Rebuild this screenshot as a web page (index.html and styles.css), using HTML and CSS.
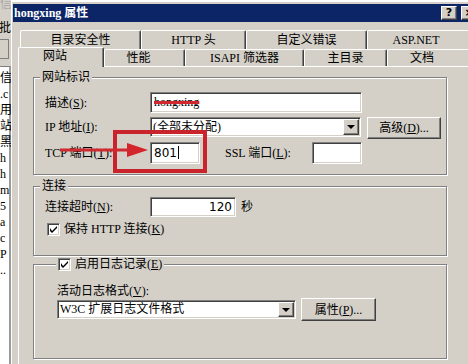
FILE: index.html
```html
<!DOCTYPE html>
<html lang="zh-CN">
<head>
    <meta charset="UTF-8">
    <title>hongxing 属性</title>
    <link rel="stylesheet" href="styles.css">
</head>
<body>

    <div class="desk">
        <!-- finestra dietro, ne resta visibile solo il bordo -->
        <div class="behind">
            <div class="behind-top">
                <div class="bt-title">信</div>
                <div class="bt-tool">批</div>
                <div class="bt-box"></div>
            </div>
            <div class="behind-list">
                <div>信</div>
                <div>.c</div>
                <div>用</div>
                <div>站</div>
                <div>黑</div>
                <div>h</div>
                <div>h</div>
                <div>m</div>
                <div>5</div>
                <div>a</div>
                <div>c</div>
                <div>P</div>
                <div>..</div>
            </div>
        </div>

        <div class="dialog">
            <div class="titlebar">
                <span class="title">hongxing 属性</span>
                <span class="tbtn">?</span>
                <span class="tbtn">×</span>
            </div>

            <div class="tabs">
                <div class="tabrow back">
                    <div class="tab w121">目录安全性</div>
                    <div class="tab w105">HTTP 头</div>
                    <div class="tab w121">自定义错误</div>
                    <div class="tab w105 last">ASP.NET</div>
                </div>
                <div class="tabrow front">
                    <div class="tab on w86 shift">网站</div>
                    <div class="tab w81 shift">性能</div>
                    <div class="tab w119">ISAPI 筛选器</div>
                    <div class="tab w83">主目录</div>
                    <div class="tab w90 last">文档</div>
                </div>
            </div>

            <div class="panel">
                <fieldset class="group g1">
                    <legend>网站标识</legend>
                    <div class="row">
                        <span class="lbl">描述(<u>S</u>):</span>
                        <span class="field desc"><span class="redacted">hongxing</span></span>
                    </div>
                    <div class="row top r2">
                        <span class="lbl pad">IP 地址(<u>I</u>):</span>
                        <span class="combo ip">
                            <span class="combo-text">(全部未分配)</span>
                            <span class="drop"><span class="tri"></span></span>
                        </span>
                        <span class="btn adv">高级(<u>D</u>)...</span>
                    </div>
                    <div class="row r3">
                        <span class="lbl">TCP 端口(<u>T</u>):</span>
                        <span class="field port">801<span class="caret"></span></span>
                        <span class="lbl ssl">SSL 端口(<u>L</u>):</span>
                        <span class="field port"></span>
                    </div>
                </fieldset>

                <fieldset class="group g2">
                    <legend>连接</legend>
                    <div class="row">
                        <span class="lbl">连接超时(<u>N</u>):</span>
                        <span class="field timeout">120</span>
                        <span class="unit">秒</span>
                    </div>
                    <div class="row check-row">
                        <span class="chk"><svg width="7" height="7" viewBox="0 0 7 7"><path d="M0 2v3l2 2l5-5v-2l-5 5z" fill="#000"/></svg></span>
                        <span class="chk-text">保持 HTTP 连接(<u>K</u>)</span>
                    </div>
                </fieldset>

                <fieldset class="group g3">
                    <legend>
                        <span class="chk"><svg width="7" height="7" viewBox="0 0 7 7"><path d="M0 2v3l2 2l5-5v-2l-5 5z" fill="#000"/></svg></span>
                        <span class="chk-text">启用日志记录(<u>E</u>)</span>
                    </legend>
                    <div class="sub-lbl">活动日志格式(<u>V</u>):</div>
                    <div class="row">
                        <span class="combo logfmt">
                            <span class="combo-text">W3C 扩展日志文件格式</span>
                            <span class="drop"><span class="tri"></span></span>
                        </span>
                        <span class="btn props">属性(<u>P</u>)...</span>
                    </div>
                </fieldset>
            </div>
        </div>
    </div>

    <!-- segni rossi disegnati sopra lo screenshot -->
    <svg class="marks" width="468" height="364" viewBox="0 0 468 364">
        <rect x="115" y="132" width="90" height="39" fill="none" stroke="#c9232b" stroke-width="4"/>
        <line x1="60" y1="150" x2="130" y2="150" stroke="#cf2a2f" stroke-width="3"/>
        <polygon points="127,143 148,150 127,157" fill="#d3252b"/>
    </svg>

</body>
</html>
```

FILE: styles.css
```css
* {
    box-sizing: border-box;
}

body {
    margin: 0;
    width: 468px;
    height: 364px;
    overflow: hidden;
    position: relative;
    background: #fff;
    color: #000;
    font-family: "Liberation Serif", "Noto Sans CJK SC", serif;
    font-size: 12px;
    line-height: 14px;
}

.desk {
    display: flex;
    height: 364px;
}

/* finestra dietro */
.behind {
    width: 11px;
    flex: none;
    overflow: hidden;
    display: flex;
    flex-direction: column;
    background: #d4d0c8;
}

.behind-top {
    height: 66px;
    flex: none;
}

.bt-title {
    color: #a8a8a8;
    margin-top: -3px;
    height: 24px;
}

.bt-tool {
    height: 18px;
    margin-left: -1px;
}

.bt-box {
    height: 20px;
    margin-right: 2px;
    border: 1px solid #808080;
    border-left: none;
}

.behind-list {
    flex: 1;
    background: #fff;
    border-top: 1px solid #808080;
    border-right: 2px solid #9a9a9a;
    padding-top: 3px;
}

.behind-list div {
    height: 16px;
    line-height: 16px;
    white-space: nowrap;
}

/* dialogo */
.dialog {
    width: 470px;
    flex: none;
    margin-top: 1px;
    border-top: 1px solid #fff;
    border-left: 1px solid #fff;
    padding: 2px 0 0 1px;
    background: #d4d0c8;
}

.titlebar {
    height: 18px;
    display: flex;
    align-items: center;
    padding: 0 4px 0 1px;
    background: #0b2566;
    color: #fff;
}

.title {
    flex: 1;
    font-weight: bold;
}

.tbtn {
    width: 16px;
    height: 14px;
    margin-left: 4px;
    background: #d4d0c8;
    border: 1px solid;
    border-color: #fff #404040 #404040 #fff;
    box-shadow: inset -1px -1px #808080;
    color: #000;
    font-family: "DejaVu Sans", sans-serif;
    font-weight: bold;
    font-size: 11px;
    line-height: 12px;
    text-align: center;
}

.tabs {
    padding-top: 8px;
}

.tabrow {
    display: flex;
}

.tabrow.back {
    margin-left: 7px;
    height: 19px;
}

.tabrow.front {
    margin-left: 5px;
    height: 17px;
}

.tab {
    flex: none;
    height: 100%;
    border-top: 1px solid #fff;
    border-left: 1px solid #fff;
    border-right: 1px solid #404040;
    box-shadow: inset -1px 0 #808080;
    border-radius: 2px 2px 0 0;
    text-align: center;
    white-space: nowrap;
}

.back .tab {
    line-height: 18px;
}

.front .tab {
    line-height: 16px;
}

.tab.shift {
    padding-right: 12px;
}

.back .tab.last {
    padding-right: 7px;
}

.front .tab.last {
    padding-right: 20px;
}

.tab.on {
    position: relative;
    z-index: 1;
    height: 20px;
    margin-top: -2px;
    background: #d4d0c8;
}

.w121 { width: 121px; }
.w105 { width: 105px; }
.w86 { width: 86px; }
.w81 { width: 81px; }
.w119 { width: 119px; }
.w83 { width: 83px; }
.w90 { width: 90px; }

.panel {
    margin-left: 5px;
    height: 300px;
    border-top: 1px solid #fff;
    border-left: 1px solid #fff;
    padding: 3px 0 0 14px;
}

/* riquadri */
.group {
    width: 414px;
    margin: 0;
    min-width: 0;
    border: 1px solid #808080;
    box-shadow: inset 1px 1px #fff, 1px 1px #fff;
}

.group legend {
    padding: 0 2px;
    line-height: 14px;
    background: #d4d0c8;
}

.g1 {
    padding: 8px 0 10px 11px;
}

.g1 legend,
.g2 legend {
    margin-left: -5px;
}

.g2 {
    margin-top: 4px;
    padding: 4px 0 19px 11px;
}

.g3 {
    margin-top: 1px;
    padding: 13px 0 37px 23px;
}

.g3 legend {
    display: flex;
    align-items: center;
    margin-left: -1px;
}

.row {
    display: flex;
    align-items: center;
}

.row.top {
    align-items: flex-start;
}

.r2 {
    margin-top: 4px;
}

.r3 {
    margin-top: 3px;
}

.lbl {
    width: 105px;
    flex: none;
    white-space: nowrap;
}

.lbl.pad {
    padding-top: 3px;
}

.lbl.ssl {
    width: 87px;
    margin-left: 25px;
}

/* controlli */
.field {
    flex: none;
    height: 21px;
    padding: 0 3px;
    background: #fff;
    border: 1px solid;
    border-color: #808080 #fff #fff #808080;
    box-shadow: inset 1px 1px #404040, inset -1px -1px #d4d0c8;
    line-height: 19px;
    white-space: nowrap;
}

.desc {
    width: 212px;
}

.redacted {
    text-decoration: line-through;
    text-decoration-color: #d0282e;
    text-decoration-thickness: 3px;
}

.port {
    width: 50px;
    height: 22px;
    line-height: 20px;
    font-family: "DejaVu Sans", sans-serif;
}

.caret {
    display: inline-block;
    width: 1px;
    height: 13px;
    margin-left: 1px;
    vertical-align: -2px;
    background: #000;
}

.timeout {
    width: 86px;
    height: 20px;
    line-height: 18px;
    text-align: right;
    font-family: "DejaVu Sans", sans-serif;
}

.unit {
    margin-left: 5px;
}

.combo {
    flex: none;
    display: flex;
    background: #fff;
    border: 1px solid;
    border-color: #808080 #fff #fff #808080;
    box-shadow: inset 1px 1px #404040, inset -1px -1px #d4d0c8;
    padding: 2px;
}

.combo-text {
    flex: 1;
    padding-left: 0;
    white-space: nowrap;
}

.ip {
    width: 211px;
    height: 20px;
}

.logfmt {
    width: 239px;
    height: 19px;
}

.logfmt .combo-text {
    line-height: 13px;
}

.drop {
    width: 16px;
    flex: none;
    display: flex;
    align-items: center;
    justify-content: center;
    background: #d4d0c8;
    border: 1px solid;
    border-color: #fff #404040 #404040 #fff;
    box-shadow: inset -1px -1px #808080;
    margin: -1px -1px -1px 0;
}

.tri {
    width: 0;
    height: 0;
    border-left: 4px solid transparent;
    border-right: 4px solid transparent;
    border-top: 4px solid #000;
}

.btn {
    flex: none;
    display: flex;
    align-items: center;
    justify-content: center;
    background: #d4d0c8;
    border: 1px solid;
    border-color: #fff #404040 #404040 #fff;
    box-shadow: inset -1px -1px #808080;
    white-space: nowrap;
}

.adv {
    width: 74px;
    height: 22px;
    margin-left: 6px;
}

.props {
    width: 75px;
    height: 23px;
    margin-left: 5px;
}

.check-row {
    margin-top: 5px;
    padding-left: 2px;
}

.chk {
    width: 13px;
    height: 13px;
    flex: none;
    display: inline-flex;
    align-items: center;
    justify-content: center;
    background: #fff;
    border: 1px solid;
    border-color: #808080 #fff #fff #808080;
    box-shadow: inset 1px 1px #404040, inset -1px -1px #d4d0c8;
}

.chk-text {
    margin-left: 4px;
    white-space: nowrap;
}

.sub-lbl {
    line-height: 14px;
}

/* annotazioni */
.marks {
    position: absolute;
    left: 0;
    top: 0;
    pointer-events: none;
}
```
